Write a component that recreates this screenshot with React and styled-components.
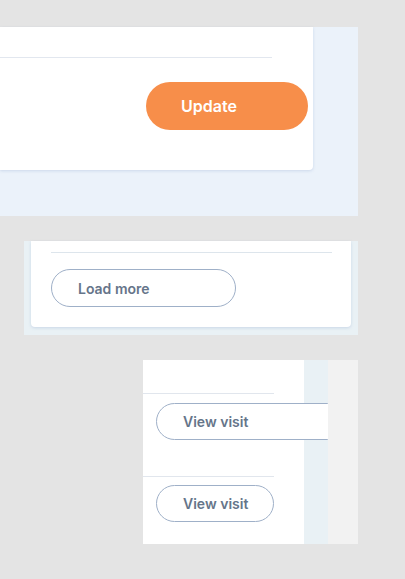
import styled, { createGlobalStyle } from "styled-components";

const GlobalStyle = createGlobalStyle`
  html, body {
    margin: 0;
    padding: 0;
    background: #e4e4e4;
    font-family: Inter, "Noto Sans", sans-serif;
  }
`;

const Page = styled.div`
  display: flex;
  flex-direction: column;
  align-items: flex-start;
  gap: 25px;
  padding-top: 27px;
`;

// first block: form footer with update button
const FormArea = styled.section`
  width: 358px;
  height: 189px;
  background: #ebf2fa;
  box-sizing: border-box;
`;

const FormCard = styled.div`
  width: 313px;
  height: 143px;
  background: #fff;
  border-bottom-right-radius: 4px;
  box-shadow: 0 1px 3px rgba(110, 140, 190, 0.25);
  display: flex;
  flex-direction: column;
  align-items: flex-end;
  padding-top: 30px;
  box-sizing: border-box;
`;

const Divider = styled.hr`
  margin: 0;
  border: 0;
  height: 1px;
  flex-shrink: 0;
  background: ${(p) => p.color || "#e2e7ef"};
  width: ${(p) => p.width}px;
  align-self: ${(p) => p.align || "flex-start"};
`;

const UpdateButton = styled.button`
  margin-top: 24px;
  margin-right: 5px;
  width: 162px;
  height: 48px;
  border: 0;
  border-radius: 24px;
  background: #f78e4a;
  color: #fff;
  font-family: Inter, sans-serif;
  font-size: 16px;
  font-weight: 600;
  text-align: left;
  padding: 0 0 0 35px;
`;

// second block: list with load more
const ListArea = styled.section`
  margin-left: 24px;
  width: 334px;
  background: #e9f1f5;
  padding: 0 7px 8px;
  box-sizing: border-box;
`;

const ListCard = styled.div`
  background: #fff;
  border-radius: 0 0 4px 4px;
  box-shadow: 0 1px 3px rgba(110, 140, 190, 0.25);
  padding: 11px 19px 20px 20px;
  display: flex;
  flex-direction: column;
`;

const OutlineButton = styled.button`
  box-sizing: border-box;
  flex-shrink: 0;
  width: ${(p) => p.width}px;
  height: ${(p) => p.height || 37}px;
  margin-top: ${(p) => p.top || 0}px;
  border: 1px solid #9fb0c8;
  border-radius: 20px;
  background: #fff;
  color: #66758a;
  font-family: Inter, sans-serif;
  font-size: 14px;
  font-weight: 600;
  text-align: left;
  padding: 0 0 0 ${(p) => p.pad || 26}px;
`;

// third block: visits column
const VisitArea = styled.section`
  margin-left: 143px;
  width: 215px;
  height: 184px;
  display: flex;
  background: #f2f2f2;
`;

const VisitColumn = styled.div`
  width: 185px;
  overflow: hidden;
  display: flex;
  background: #e9f1f5;
`;

const VisitList = styled.div`
  width: 161px;
  flex-shrink: 0;
  background: #fff;
  display: flex;
  flex-direction: column;
  padding-top: 33px;
`;

const VisitRow = styled.div`
  display: flex;
  flex-direction: column;
  padding-bottom: ${(p) => p.bottom}px;
`;

const ButtonWrap = styled.div`
  display: flex;
  padding-left: 13px;
`;

const visits = [
  { width: 190, top: 9, bottom: 36 },
  { width: 118, top: 8, bottom: 22 },
];

export default function App() {
  return (
    <>
      <GlobalStyle />
      <Page>
        <FormArea>
          <FormCard>
            <Divider width={272} align="flex-start" />
            <UpdateButton>Update</UpdateButton>
          </FormCard>
        </FormArea>

        <ListArea>
          <ListCard>
            <Divider width={281} color="#dde5ec" />
            <OutlineButton width={185} height={38} top={16}>
              Load more
            </OutlineButton>
          </ListCard>
        </ListArea>

        <VisitArea>
          <VisitColumn>
            <VisitList>
              {visits.map((v, i) => (
                <VisitRow key={i} bottom={v.bottom}>
                  <Divider width={131} color="#e1e6ed" />
                  <ButtonWrap>
                    <OutlineButton width={v.width} top={v.top} pad={26}>
                      View visit
                    </OutlineButton>
                  </ButtonWrap>
                </VisitRow>
              ))}
            </VisitList>
          </VisitColumn>
        </VisitArea>
      </Page>
    </>
  );
}
